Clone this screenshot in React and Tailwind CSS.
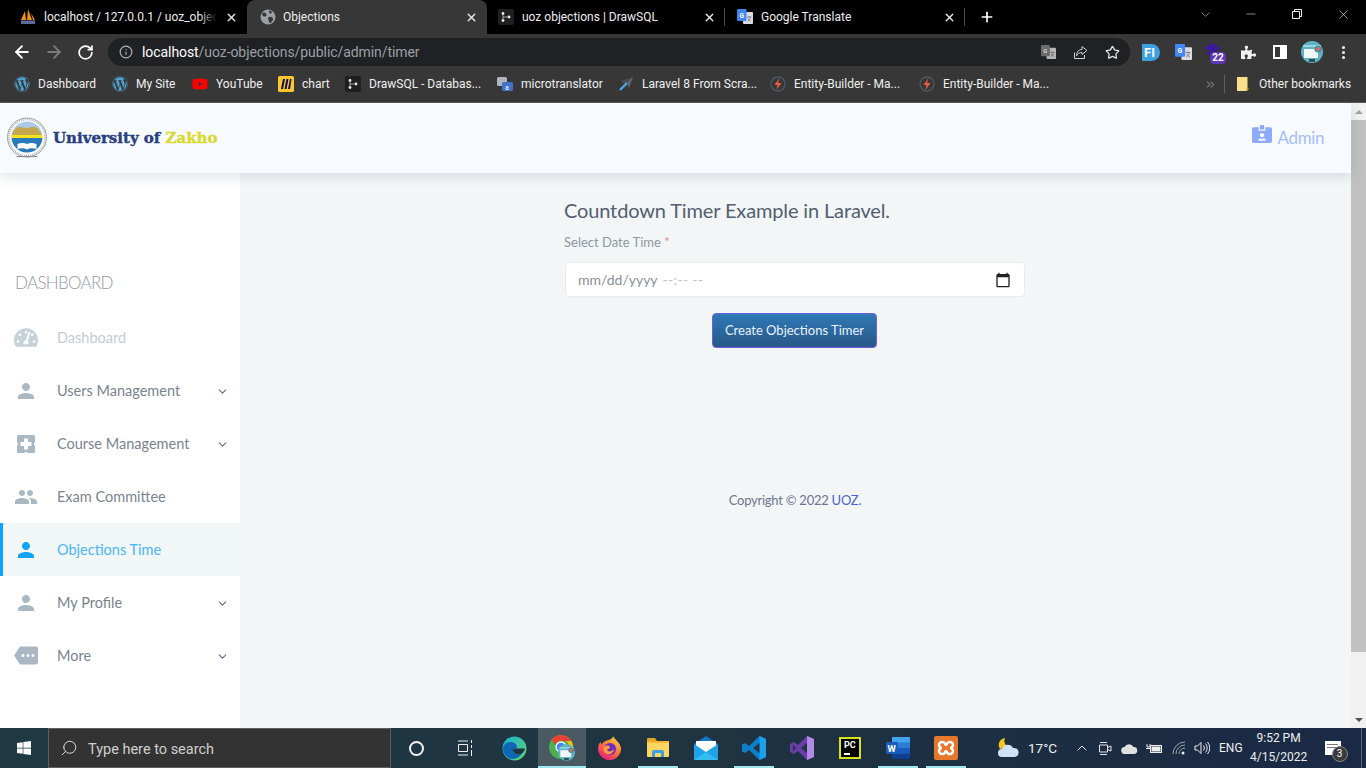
import { ArrowLeft, ArrowRight, RotateCw, Info, Star, X, Plus, ChevronDown, ChevronUp, Minus, Search, EllipsisVertical, ChevronsRight } from 'lucide-react';
import { FaWordpress, FaYoutube, FaWindows, FaIdCardAlt, FaTachometerAlt, FaPuzzlePiece } from 'react-icons/fa';
import { MdPerson, MdPeople, MdMore, MdCalendarToday } from 'react-icons/md';

function DrawSqlIcon() {
  return (
    <svg width="16" height="16" viewBox="0 0 16 16">
      <rect width="16" height="16" rx="2" fill="#1f1f1f" />
      <circle cx="5" cy="4.5" r="1.4" fill="#eee" /><circle cx="5" cy="11.5" r="1.4" fill="#eee" /><circle cx="11" cy="8" r="1.4" fill="#eee" />
      <path d="M5 5v6M5 8h6" stroke="#bbb" strokeWidth="0.8" />
    </svg>
  );
}
function PmaIcon() {
  return (
    <svg width="16" height="16" viewBox="0 0 16 16">
      <path d="M1 11 5 2l1 9zM7 11 8 0l4 11zM13 11l-2-7 4 7z" fill="#f29111" />
      <rect x="1" y="11.500" width="14" height="3.500" fill="#5c6a9c" />
    </svg>
  );
}
function GlobeIcon() {
  return (
    <svg width="16" height="16" viewBox="0 0 16 16">
      <circle cx="8" cy="8" r="7.500" fill="#9aa0a6" />
      <path d="M3 3.500c2 0 3 .5 3.500 2S5 8 4 7.500 2 6 2 5zM9 8c2-.5 4 .5 4 2s-2 4-3 4-1-2-1.500-3S8 8.500 9 8zM9 1.500l3 1-1 2.500-2-1.500z" fill="#373737" />
    </svg>
  );
}
function TranslateIcon({ size = 16 }) {
  return (
    <svg width={size} height={size} viewBox="0 0 16 16">
      <rect x="6" y="3" width="10" height="12" rx="1" fill="#dadce0" />
      <rect x="0" y="0" width="9.5" height="12" rx="1" fill="#4285f4" />
      <text x="2.4" y="8.6" fontSize="6.5" fontWeight="700" fill="#fff" fontFamily="Roboto, sans-serif">G</text>
      <path d="M10 8h4.5M12 7v1M13.5 8c-.4 2-1.6 3.5-3 4.3M11 9.5c.6 1.2 1.6 2.2 2.8 2.8" stroke="#6b7280" strokeWidth="0.8" fill="none" />
    </svg>
  );
}
function MiroIcon() {
  return (
    <svg width="16" height="16" viewBox="0 0 16 16">
      <rect width="16" height="16" rx="1.5" fill="#fcc72c" />
      <path d="M3 13 5 3h2L5 13zM6.500 13 8.500 3h2l-2 10zM10 13l2-10h1.500l-1.500 10z" fill="#0c0c50" />
    </svg>
  );
}
function MicroIcon() {
  return (
    <svg width="16" height="16" viewBox="0 0 16 16">
      <rect x="0" y="1" width="10" height="9" rx="1.500" fill="#b0b5bd" />
      <rect x="5" y="6" width="11" height="9" rx="1.500" fill="#3f72c8" />
      <text x="8" y="13.500" fontSize="7" fill="#fff" fontFamily="Roboto, sans-serif">a</text>
    </svg>
  );
}
function LaravelIcon() {
  return (
    <svg width="16" height="16" viewBox="0 0 16 16">
      <path d="M15 1 3 5l3 2 2 3z" fill="#4b4f55" />
      <path d="M9 7 2 14" stroke="#49a6ea" strokeWidth="2.400" />
      <path d="M15 1 11 12 9 7z" fill="#62666c" />
    </svg>
  );
}
function BoltIcon() {
  return (
    <svg width="16" height="16" viewBox="0 0 16 16">
      <circle cx="8" cy="8" r="7" fill="none" stroke="#485a68" strokeWidth="1.300" />
      <path d="M9.500 2 4.500 9h3l-1 5 5-7H8z" fill="#ef5b45" />
    </svg>
  );
}
function Folder() {
  return (
    <svg width="12" height="14" viewBox="0 0 12 14">
      <path d="M0 0h10.500v11L9 14H0z" fill="#fbe08a" />
      <path d="M9 14v-2.500h3L10 14z" fill="#e7b93d" />
    </svg>
  );
}
function ProfileIcon({ size = 22 }) {
  return (
    <svg width={size} height={size} viewBox="0 0 22 22">
      <circle cx="11" cy="11" r="11" fill="#5fb4c4" />
      <path d="M2 5h18" stroke="#9ad7e0" strokeWidth="2" />
      <rect x="3" y="8" width="14" height="9" fill="#f4f6f7" />
      <circle cx="17" cy="8" r="3.600" fill="#3f8e9d" /><circle cx="17" cy="8" r="2" fill="#f0605e" />
      <rect x="8" y="18" width="6" height="3" fill="#344e5a" />
    </svg>
  );
}

const TABS = [
  { title: 'localhost / 127.0.0.1 / uoz_objections', icon: <PmaIcon />, w: 'w-[247px]', pad: 'pl-[20px]', gap: 'gap-[8px]', fade: true },
  { title: 'Objections', icon: <GlobeIcon />, w: 'w-[240px]', pad: 'pl-[13px]', gap: 'gap-[7px]', active: true },
  { title: 'uoz objections | DrawSQL', icon: <DrawSqlIcon />, w: 'w-[238px]', pad: 'pl-[11px]', gap: 'gap-[8px]', sep: true },
  { title: 'Google Translate', icon: <TranslateIcon />, w: 'w-[240px]', pad: 'pl-[12px]', gap: 'gap-[8px]', sep: true },
];

const BOOKMARKS = [
  { label: 'Dashboard', w: 'w-[58px]', icon: <FaWordpress size={16} color="#4ea3cf" /> },
  { label: 'My Site', w: 'w-[40px]', icon: <FaWordpress size={16} color="#4ea3cf" /> },
  { label: 'YouTube', w: 'w-[46px]', icon: <FaYoutube size={16} color="#ff0000" /> },
  { label: 'chart', w: 'w-[27px]', icon: <MiroIcon /> },
  { label: 'DrawSQL - Databas...', w: 'w-[112px]', icon: <DrawSqlIcon /> },
  { label: 'microtranslator', w: 'w-[81px]', icon: <MicroIcon /> },
  { label: 'Laravel 8 From Scra...', w: 'w-[112px]', icon: <LaravelIcon /> },
  { label: 'Entity-Builder - Ma...', w: 'w-[109px]', icon: <BoltIcon /> },
  { label: 'Entity-Builder - Ma...', w: 'w-[109px]', icon: <BoltIcon /> },
];

function EdgeIcon() {
  return (
    <svg width="25" height="25" viewBox="0 0 24 24">
      <defs>
        <linearGradient id="edgeA" x1="0" y1="0" x2="1" y2="1"><stop offset="0" stopColor="#1bb0d8" /><stop offset="1" stopColor="#5ed66c" /></linearGradient>
      </defs>
      <circle cx="12" cy="12" r="11.500" fill="url(#edgeA)" />
      <path d="M1 13C1 7 6 5 10 6c4 1 5 4 4 6-1 1-3 1-4 0 0 4 4 7 9 5-3 5-9 6-13 4-3-2-5-5-5-8z" fill="#0f66b8" />
      <path d="M10 12c0 4 4 7 9 5 1-1 3-3 3-5h-8c-1 1-3 1-4 0z" fill="#1f3441" />
    </svg>
  );
}
function ChromeIcon() {
  return (
    <div className="relative w-[26px] h-[26px]">
      <svg width="24" height="24" viewBox="0 0 24 24">
        <circle cx="12" cy="12" r="12" fill="#4caf50" />
        <path d="M12 0a12 12 0 0 1 10.400 6H12a6 6 0 0 0-5.700 4L2.500 4.500A12 12 0 0 1 12 0z" fill="#ea4335" />
        <path d="M22.400 6A12 12 0 0 1 12 24l5-8a6 6 0 0 0 0-10z" fill="#fbbc05" />
        <circle cx="12" cy="12" r="5" fill="#4285f4" stroke="#fff" strokeWidth="1.300" />
      </svg>
      <div className="absolute left-[9px] top-[9px]"><ProfileIcon size={17} /></div>
    </div>
  );
}
function FirefoxIcon() {
  return (
    <svg width="24" height="24" viewBox="0 0 24 24">
      <defs>
        <linearGradient id="ffA" x1="0.800" y1="0" x2="0.200" y2="1"><stop offset="0" stopColor="#ffd43a" /><stop offset="0.500" stopColor="#ff7139" /><stop offset="1" stopColor="#e31587" /></linearGradient>
      </defs>
      <path d="M15 0c1 3 7 6 8 12a11.500 11.500 0 1 1-22-4l1.500-2 1 2.500C6 5 10 4 11 4 13 3 15 2 15 0z" fill="url(#ffA)" />
      <circle cx="12" cy="13" r="6" fill="#6a2bc4" />
      <path d="M6 11c2-2 5-2 6 0 0 2-3 2-3 3 1 2 5 2 7-1 0 4-4 6-7 5-3-1-4-4-3-7z" fill="#ff9a3d" />
    </svg>
  );
}
function ExplorerIcon() {
  return (
    <svg width="22" height="20" viewBox="0 0 22 20">
      <path d="M0 1a1 1 0 0 1 1-1h7l2 3H0z" fill="#e0a526" />
      <rect x="0" y="3" width="22" height="16" rx="1" fill="#fcd663" />
      <rect x="0" y="3" width="22" height="2" fill="#f3b830" />
      <path d="M5 19v-5a2 2 0 0 1 2-2h8a2 2 0 0 1 2 2v5h-3v-4H8v4z" fill="#3d9fe0" />
    </svg>
  );
}
function MailIcon() {
  return (
    <svg width="24" height="24" viewBox="0 0 24 24">
      <path d="M0 8 12 0l12 8v2H0z" fill="#1577c8" />
      <path d="M2 5h20v8l-10 5-10-5z" fill="#fff" />
      <path d="M0 8l12 8 12-8v16H0z" fill="#1ea4e6" />
      <path d="M0 24 12 16l12 8z" fill="#35bdf2" />
    </svg>
  );
}
function VsCodeIcon() {
  return (
    <svg width="24" height="24" viewBox="0 0 24 24">
      <path d="M17.500 0 24 3v18l-6.500 3L7 14l-4 3-3-1.500v-7L3 7l4 3z" fill="#0e7fcb" />
      <path d="M17.500 0 24 3v18l-6.500 3V16l-6-4 6-4z" fill="#1da1ec" />
      <path d="M17.500 7 11 12l6.500 5z" fill="#1f3441" />
    </svg>
  );
}
function VsIcon() {
  return (
    <svg width="24" height="24" viewBox="0 0 24 24">
      <path d="M17 0 24 3v18l-7 3-9-9-4 3-4-2V8l4-2 4 3z" fill="#6a3ca8" />
      <path d="M17 0 24 3v18l-7 3z" fill="#b18ae6" />
      <path d="M17 7 11 12l6 5z" fill="#1f3441" />
      <path d="M3 9v6l3-3z" fill="#1f3441" />
    </svg>
  );
}
function PyCharmIcon() {
  return (
    <div className="w-[22px] h-[22px] border-[2px] border-[#d7e21a] bg-black flex flex-col pl-[3px] pt-[1px]">
      <span className="text-white text-[9px] leading-[11px] font-bold">PC</span>
      <span className="w-[6px] h-[1.500px] bg-white mt-[2px]" />
    </div>
  );
}
function WordIcon() {
  return (
    <svg width="24" height="22" viewBox="0 0 24 22">
      <rect x="6" y="0" width="18" height="22" rx="1" fill="#2b7cd3" />
      <rect x="6" y="0" width="18" height="5.500" fill="#41a5ee" />
      <rect x="6" y="11" width="18" height="5.500" fill="#185abd" />
      <rect x="6" y="16.500" width="18" height="5.500" fill="#103f91" />
      <rect x="0" y="5" width="12" height="12" rx="1" fill="#1a5ebd" />
      <text x="1.500" y="14.500" fontSize="9.500" fontWeight="700" fill="#fff" fontFamily="Roboto, sans-serif">W</text>
    </svg>
  );
}
function XamppIcon() {
  return (
    <svg width="24" height="24" viewBox="0 0 24 24">
      <rect width="24" height="24" rx="2" fill="#e8772e" />
      <path d="M8 6a3 3 0 0 0 0 6 3 3 0 0 0 0 6h1c2 0 2-3 3-3s1 3 3 3h1a3 3 0 0 0 0-6 3 3 0 0 0 0-6h-1c-2 0-2 3-3 3S11 6 9 6z" fill="none" stroke="#fff" strokeWidth="2.400" />
    </svg>
  );
}

const TASK_APPS = [
  { icon: <EdgeIcon /> },
  { icon: <ChromeIcon />, active: true },
  { icon: <FirefoxIcon /> },
  { icon: <ExplorerIcon />, open: true },
  { icon: <MailIcon /> },
  { icon: <VsCodeIcon />, open: true },
  { icon: <VsIcon /> },
  { icon: <PyCharmIcon /> },
  { icon: <WordIcon />, open: true },
  { icon: <XamppIcon />, open: true },
];

function CourseIcon() {
  return (
    <svg width="18" height="18" viewBox="0 0 18 18">
      <path fillRule="evenodd" d="M1.500 0h15A1.500 1.500 0 0 1 18 1.500V7l-1.200 2L18 11v5.500a1.500 1.500 0 0 1-1.500 1.500H11l-2-1.200L7 18H1.500A1.500 1.500 0 0 1 0 16.500V11l1.200-2L0 7V1.500A1.500 1.500 0 0 1 1.500 0zM7 3.500V7H3.500v4H7v3.500h4V11h3.500V7H11V3.500z" fill="#a9b8c2" />
    </svg>
  );
}

const NAV = [
  { label: 'Dashboard', icon: <FaTachometerAlt size={25} color="#c5d2d9" />, dim: true },
  { label: 'Users Management', icon: <MdPerson size={24} color="#a9b8c2" />, arrow: true },
  { label: 'Course Management', icon: <CourseIcon />, arrow: true },
  { label: 'Exam Committee', icon: <MdPeople size={24} color="#a9b8c2" /> },
  { label: 'Objections Time', icon: <MdPerson size={24} color="#0ea5f5" />, active: true },
  { label: 'My Profile', icon: <MdPerson size={24} color="#a9b8c2" />, arrow: true },
  { label: 'More', icon: <MdMore size={27} color="#a9b8c2" className="-scale-x-100 rotate-180" />, arrow: true },
];

function NavItem({ item }) {
  return (
    <div className={`h-[53px] flex items-center ${item.active ? 'bg-[#f1f6f7] border-l-[3px] border-[#0aa5ff] pl-[11px]' : 'pl-[14px]'} pr-[11px]`}>
      <span className="w-[24px] flex justify-center shrink-0">{item.icon}</span>
      <span className={`ml-[19px] flex-1 text-[14.500px] whitespace-nowrap ${item.dim ? 'text-[#c3cbd3]' : item.active ? 'text-[#4db5f7]' : 'text-[#79848f]'}`}>{item.label}</span>
      {item.arrow && <ChevronDown size={13} color="#5f6f80" className="mt-[2px]" />}
    </div>
  );
}

function BrowserChrome() {
  return (
    <div className="shrink-0 text-[12px] text-white">
      {/* tab strip */}
      <div className="h-[34px] bg-black flex">
        {TABS.map(t => (
          <div key={t.title} className={`${t.w} ${t.pad} ${t.gap} relative flex items-center pr-[9px] ${t.active ? 'bg-[#373737] rounded-t-lg' : ''}`}>
            {t.icon}
            <span className="relative flex-1 min-w-0 overflow-hidden whitespace-nowrap text-[12px] text-[#eeeeee]">
              {t.title}
              {t.fade && <span className="absolute right-0 inset-y-0 w-[18px] bg-gradient-to-r from-transparent to-black" />}
            </span>
            <X size={13} strokeWidth={2.500} color="#e8e8e8" />
            {t.sep && <span className="absolute right-0 top-[8px] h-[18px] w-px bg-[#4b4b4b]" />}
          </div>
        ))}
        <div className="ml-[14px] flex items-center"><Plus size={16} strokeWidth={2.500} /></div>
        <div className="ml-auto flex items-start pt-[7px] text-[#e8e8e8]">
          <span className="w-[46px] flex justify-center"><ChevronDown size={15} strokeWidth={1} color="#ccc" /></span>
          <span className="w-[46px] flex justify-center"><Minus size={14} strokeWidth={1} /></span>
          <span className="w-[46px] flex justify-center pt-[2px]">
            <svg width="10" height="10" viewBox="0 0 10 10" fill="none" stroke="#eee"><path d="M.5 2.500h7v7h-7zM2.500 2.500v-2h7v7h-2" /></svg>
          </span>
          <span className="w-[46px] flex justify-center"><X size={15} strokeWidth={1} /></span>
        </div>
      </div>
      {/* toolbar */}
      <div className="h-[36px] bg-[#373737] flex items-center pl-[12px]">
        <ArrowLeft size={20} strokeWidth={2.200} />
        <ArrowRight size={20} strokeWidth={2.200} color="#7b7b7b" className="ml-[12px]" />
        <RotateCw size={17} strokeWidth={2.400} className="ml-[13px]" />
        <div className="ml-[14px] h-[28px] w-[1022px] rounded-full bg-[#202124] flex items-center pl-[11px] pr-[10px]">
          <Info size={14} color="#b0b3b7" />
          <span className="ml-[9px] text-[14px] tracking-[-0.07px] text-[#9aa0a6] whitespace-nowrap"><span className="text-white">localhost</span>/uoz-objections/public/admin/timer</span>
          <span className="ml-auto grayscale opacity-80"><TranslateIcon size={15} /></span>
          <svg className="ml-[17px]" width="15" height="15" viewBox="0 0 15 15" fill="none" stroke="#d0d0d0">
            <path d="M1.500 7.500v6h10V10M9 1.500l5 4-5 4V7.500C6.500 7.500 4.500 8.500 3.500 11c0-4 2-6.500 5.500-6.500z" />
          </svg>
          <Star size={15} color="#e8e8e8" className="ml-[17px]" />
        </div>
        <div className="ml-[12px] w-[18px] h-[17px] rounded-r-full bg-[#3ca1e0] text-[13px] font-bold leading-[17px] pl-[2px]">FI</div>
        <span className="ml-[15px]"><TranslateIcon size={17} /></span>
        <div className="relative ml-[12px] w-[18px] h-[18px]">
          <svg width="17" height="13" viewBox="0 0 17 13"><path d="M8.500 0 17 5l-8.500 5L0 5z" fill="#3a1a9c" /><path d="M3 8v3l5.500 2 5.500-2V8l-5.500 3z" fill="#3a1a9c" /></svg>
          <span className="absolute left-[6px] top-[9px] w-[16px] h-[12px] rounded-sm bg-[#5d37b5] text-[10px] leading-[12px] font-bold text-center">22</span>
        </div>
        <FaPuzzlePiece size={15} className="ml-[19px]" color="#f0f0f0" />
        <div className="ml-[17px] w-[14px] h-[14px] border-2 border-white flex justify-end"><span className="w-[5px] h-full bg-white" /></div>
        <span className="ml-[14px]"><ProfileIcon /></span>
        <EllipsisVertical size={17} strokeWidth={2.400} className="ml-[12px]" color="#eee" />
      </div>
      {/* bookmarks */}
      <div className="h-[33px] bg-[#373737] border-b border-[#555] flex items-center pl-[6px] pr-[15px] pb-[4px]">
        {BOOKMARKS.map((b, i) => (
          <div key={i} className="flex items-center px-[8px] gap-[8px]">
            <span className="w-[16px] flex justify-center">{b.icon}</span>
            <span className={`${b.w} whitespace-nowrap text-[12px] text-[#f0f0f0]`}>{b.label}</span>
          </div>
        ))}
        <ChevronsRight size={13} color="#777" className="ml-auto" />
        <span className="ml-[7px] w-px h-[18px] bg-[#5f5f5f]" />
        <span className="ml-[12px]"><Folder /></span>
        <span className="ml-[10px] w-[92px] whitespace-nowrap text-[12px] text-[#f0f0f0]">Other bookmarks</span>
      </div>
    </div>
  );
}

function Taskbar() {
  return (
    <div className="relative z-20 shrink-0 h-[40px] bg-gradient-to-r from-[#1f3a44] via-[#1f3340] to-[#1a2945] flex items-stretch text-white [font-family:Roboto,sans-serif]">
      <div className="w-[48px] flex items-center justify-center"><FaWindows size={16} /></div>
      <div className="w-[343px] bg-[#333333] border border-[#5f5f5f] flex items-center pl-[11px]">
        <Search size={18} strokeWidth={1.300} className="-scale-x-100" color="#ddd" />
        <span className="ml-[10px] mt-[3px] text-[14.500px] text-[#cfcfcf]">Type here to search</span>
      </div>
      <div className="w-[50px] flex items-center justify-center"><span className="w-[15px] h-[15px] rounded-full border-2 border-[#f2f2f2]" /></div>
      <div className="w-[49px] flex items-center justify-center pr-[2px]">
        <svg width="16" height="16" viewBox="0 0 16 16" fill="none" stroke="#eee"><path d="M1 1h10M1 15h10M1.500 4.500h9v7h-9zM14.500 0v3M14.500 5v3M14.500 10v6" /></svg>
      </div>
      <div className="flex">
        {TASK_APPS.map((a, i) => (
          <div key={i} className={`relative w-[48px] flex items-center justify-center ${a.active ? 'bg-[#4a5a62]' : ''}`}>
            {a.icon}
            {(a.active || a.open) && <span className={`absolute bottom-0 h-[2px] bg-[#9fe6ef] ${a.active ? 'inset-x-0' : 'inset-x-[4px]'}`} />}
          </div>
        ))}
      </div>
      <div className="ml-[27px] flex items-center">
        <svg width="23" height="20" viewBox="0 0 23 20">
          <path d="M8 0a7 7 0 0 0 3 9L3 11A7 7 0 0 1 8 0z" fill="#f5c518" />
          <path d="M5 19a4 4 0 0 1 0-8 6 6 0 0 1 11-1 4.500 4.500 0 0 1 2 9z" fill="#cfe4f2" />
        </svg>
        <span className="ml-[8px] mt-px text-[13.500px] text-[#eeeeee]">17°C</span>
        <ChevronUp size={16} strokeWidth={1.500} color="#e5e5e5" className="ml-[17px]" />
        <svg className="ml-[8px]" width="14" height="15" viewBox="0 0 14 15" fill="none" stroke="#e5e5e5"><path d="M2 1.500h7M2 13.500h7M1.500 4h8v7h-8zM9.500 6.500l3.500-1.500v5l-3.500-1.500" /></svg>
        <svg className="ml-[9px]" width="17" height="11" viewBox="0 0 17 11"><path d="M4 11a3.500 3.500 0 0 1-.500-7 5 5 0 0 1 9 0A3.500 3.500 0 0 1 13 11z" fill="#e0e0e0" /></svg>
        <svg className="ml-[8px]" width="17" height="11" viewBox="0 0 17 11" fill="none" stroke="#eee"><rect x="4.500" y="2.500" width="11" height="7" /><rect x="6" y="4" width="8" height="4" fill="#eee" /><path d="M0 5.500h4M1 1v3h3V1" /></svg>
        <svg className="ml-[9px]" width="15" height="14" viewBox="0 0 15 14" fill="none" stroke="#9aa3a8"><path d="M1 13a12 12 0 0 1 12-12M4 13a9 9 0 0 1 9-9M7 13a6 6 0 0 1 6-6" /><circle cx="11" cy="12" r="1.500" fill="#eee" stroke="none" /></svg>
        <svg className="ml-[7px]" width="16" height="14" viewBox="0 0 16 14" fill="none" stroke="#eee"><path d="M1 5h2.500L7 1.500v11L3.500 9H1zM9.500 4.500a4 4 0 0 1 0 5M11.500 2.500a7 7 0 0 1 0 9M13.500 1a9 9 0 0 1 0 12" /></svg>
        <span className="ml-[9px] text-[12px] text-[#eeeeee]">ENG</span>
        <div className="ml-[10px] w-[52px] flex flex-col items-center text-[12px] leading-[19px] text-[#eeeeee] whitespace-nowrap">
          <span>9:52 PM</span>
          <span>4/15/2022</span>
        </div>
        <div className="relative ml-[20px] w-[16px] h-[14px] bg-white">
          <span className="absolute left-[2px] top-[3px] w-[11px] h-px bg-[#777]" />
          <span className="absolute left-[2px] top-[6px] w-[11px] h-px bg-[#777]" />
          <span className="absolute left-[7px] top-[5px] w-[16px] h-[16px] rounded-full bg-[#3a3a3a] border border-[#888] text-[10px] leading-[14px] text-center">3</span>
        </div>
      </div>
      <span className="absolute right-[4px] top-0 bottom-0 w-px bg-[#56677a]" />
    </div>
  );
}

export default function App() {
  return (
    <div className="h-screen w-full overflow-hidden flex flex-col [font-family:Roboto,sans-serif]">
      <BrowserChrome />
      <div className="flex-1 min-h-0 flex">
        <div className="flex-1 min-w-0 flex flex-col bg-[#f2f6f7] [font-family:Lato,sans-serif]">
          {/* header */}
          <header className="relative z-10 h-[70px] shrink-0 bg-[#f7fbff] shadow-[0_4px_12px_rgba(60,80,110,0.16)] flex items-center pl-[6px] pr-[27px]">
            <svg width="42" height="42" viewBox="0 0 41 42">
              <circle cx="20.500" cy="20.500" r="19.500" fill="#fff" stroke="#888" strokeWidth="0.800" />
              <circle cx="20.500" cy="20.500" r="18" fill="none" stroke="#aaa" strokeWidth="1.500" strokeDasharray="1 1" />
              <clipPath id="seal"><circle cx="20.500" cy="20" r="15.500" /></clipPath>
              <g clipPath="url(#seal)">
                <rect x="0" y="0" width="41" height="21" fill="#a9cbe8" />
                <path d="M5 19c2-7 5-9 8-9 3 0 5 1 7.500 1s4-2 7-1c3 0 6 3 8 9z" fill="#c6a84c" />
                <rect x="0" y="18" width="41" height="3" fill="#f4e31c" />
                <rect x="0" y="21" width="41" height="20" fill="#2a7ab9" />
                <path d="M11 27c3-1.500 7-1.500 9.500 0 2.500-1.500 6.500-1.500 9.500 0v5c-3-1-7-1-9.500.5-2.500-1.500-6.500-1.500-9.500-.5z" fill="#fff" />
              </g>
              <rect x="10" y="39" width="21" height="1" fill="#888" />
            </svg>
            <span className="ml-[5px] [font-family:'DejaVu_Serif',serif] font-bold [-webkit-text-stroke:0.4px] text-[15px] text-[#2a3f7f] whitespace-nowrap">University of <span className="text-[#d9d92f]">Zakho</span></span>
            <div className="ml-auto flex items-center text-[#a6bdfb]">
              <FaIdCardAlt size={20} color="#8dabfa" className="-mt-[8px]" />
              <span className="ml-[6px] -mt-[1px] text-[17px] tracking-[-0.4px]">Admin</span>
            </div>
          </header>
          <div className="flex-1 min-h-0 flex">
            {/* sidebar */}
            <aside className="w-[240px] shrink-0 bg-white pt-[97px]">
              <div className="pl-[15px] h-[26px] leading-[26px] text-[17px] tracking-[-0.7px] font-light text-[#8f99a3]">DASHBOARD</div>
              <nav className="mt-[15px]">
                {NAV.map(item => <NavItem key={item.label} item={item} />)}
              </nav>
            </aside>
            {/* content */}
            <main className="flex-1 min-w-0 pt-[24px] pl-[325px]">
              <div className="w-[460px]">
                <h1 className="-ml-px text-[20px] leading-[26px] tracking-[-0.14px] text-[#53606f]">Countdown Timer Example in Laravel.</h1>
                <label className="block -ml-px mt-[9px] text-[13px] leading-[20px] text-[#8f98a3]">Select Date Time <span className="text-[#e58a96]">*</span></label>
                <div className="mt-[10px] h-[35px] bg-white border border-[#e8ebee] rounded-[4px] flex items-center pl-[12px] pr-[13px] text-[14px]">
                  <span className="text-[#8b9098]">mm/dd/yyyy</span>
                  <span className="ml-[5px] tracking-[0.3px] text-[#bfc3c7]">--:-- --</span>
                  <MdCalendarToday size={16} color="#222" className="ml-auto" />
                </div>
                <div className="mt-[16px] flex justify-center pr-px">
                  <button className="h-[35px] w-[165px] rounded-[4px] border border-[#6f5fe0] bg-gradient-to-b from-[#2f79b7] to-[#285888] text-[13px] text-[#e8f2fa]">Create Objections Timer</button>
                </div>
                <p className="mt-[143px] text-center text-[13px] tracking-[-0.25px] text-[#6f7390]">Copyright © 2022 <span className="text-[#4b63d2]">UOZ.</span></p>
              </div>
            </main>
          </div>
        </div>
        {/* scrollbar */}
        <div className="w-[15px] shrink-0 bg-[#f1f1f1] flex flex-col items-center justify-between">
          <div className="h-[17px] flex items-center"><span className="border-x-[4px] border-x-transparent border-b-[4px] border-b-[#a3a3a3]" /></div>
          <div className="w-full h-[532px] bg-[#c1c1c1]" />
          <div className="mt-[59px] h-[17px] flex items-center"><span className="border-x-[4px] border-x-transparent border-t-[4px] border-t-[#505050]" /></div>
        </div>
      </div>
      <Taskbar />
    </div>
  );
}
